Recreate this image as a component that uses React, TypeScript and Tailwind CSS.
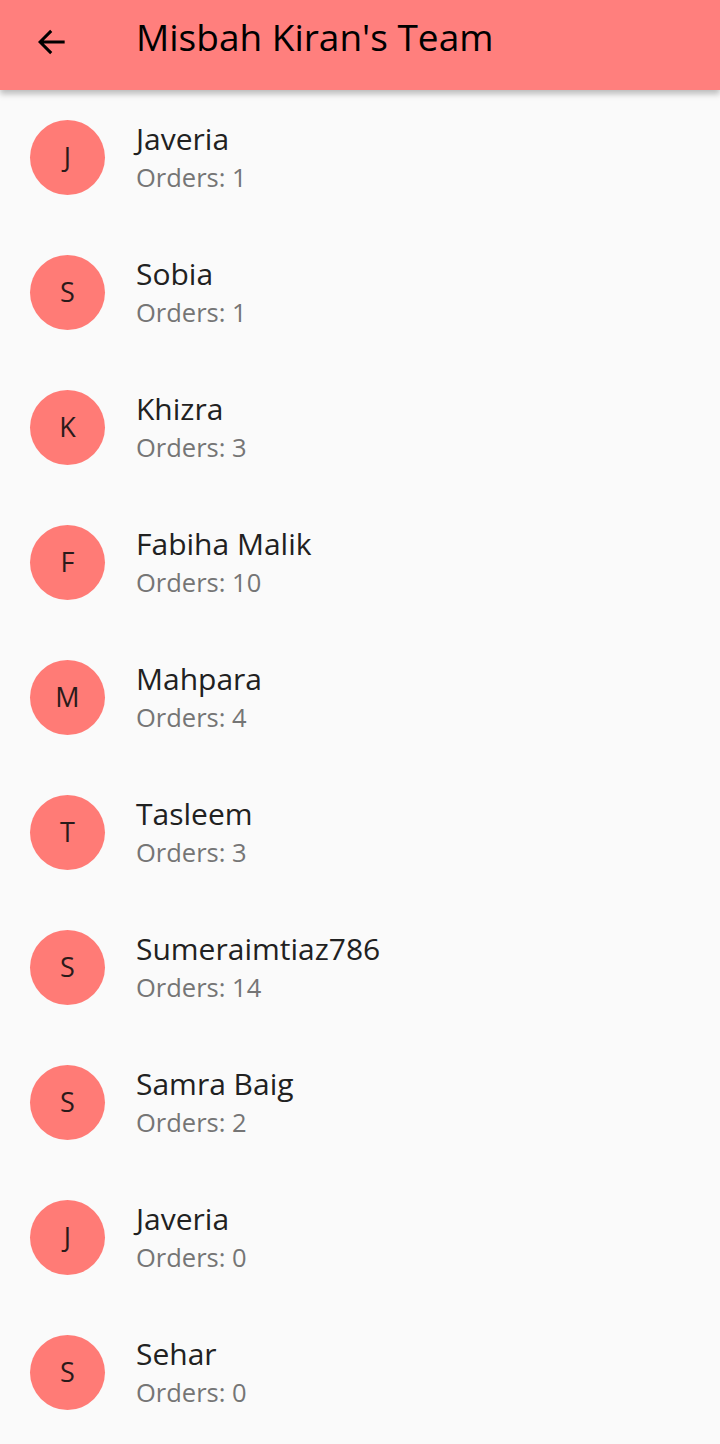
import React from 'react';

interface Member {
  name: string;
  orders: number;
}

const members: Member[] = [
  { name: 'Javeria', orders: 1 },
  { name: 'Sobia', orders: 1 },
  { name: 'Khizra', orders: 3 },
  { name: 'Fabiha Malik', orders: 10 },
  { name: 'Mahpara', orders: 4 },
  { name: 'Tasleem', orders: 3 },
  { name: 'Sumeraimtiaz786', orders: 14 },
  { name: 'Samra Baig', orders: 2 },
  { name: 'Javeria', orders: 0 },
  { name: 'Sehar', orders: 0 },
];

const App: React.FC = () => {
  return (
    <div
      className="min-h-[1444px] w-[720px] bg-[#fafafa] overflow-hidden"
      style={{ fontFamily: '"Open Sans", "Noto Sans", sans-serif' }}
    >
      <header className="relative z-10 h-[90px] bg-[#ff7f7d] flex items-center shadow-[0_4px_6px_rgba(0,0,0,0.25)]">
        <button className="w-[136px] h-full flex items-center pl-[33px] -mt-[6px]" aria-label="Back">
          <svg width="38" height="38" viewBox="0 0 24 24" fill="none">
            <path d="M20 12H4.5M11.5 5L4.5 12l7 7" stroke="#000" strokeWidth="1.9" />
          </svg>
        </button>
        <h1 className="text-[37px] leading-none text-black -mt-[18px]">Misbah Kiran's Team</h1>
      </header>

      <ul>
        {members.map((m, i) => (
          <li key={i} className="h-[135px] flex items-center">
            <div className="ml-[30px] w-[75px] h-[75px] rounded-full bg-[#ff7b76] flex items-center justify-center text-[27px] text-[#2a1a1a]">
              {m.name.charAt(0)}
            </div>
            <div className="ml-[31px] flex flex-col -mt-[2px]">
              <span className="text-[30px] leading-[36px] text-[#212121]">{m.name}</span>
              <span className="text-[25.5px] leading-[32px] text-[#757575] mt-[4px]">Orders: {m.orders}</span>
            </div>
          </li>
        ))}
      </ul>
    </div>
  );
};

export default App;
